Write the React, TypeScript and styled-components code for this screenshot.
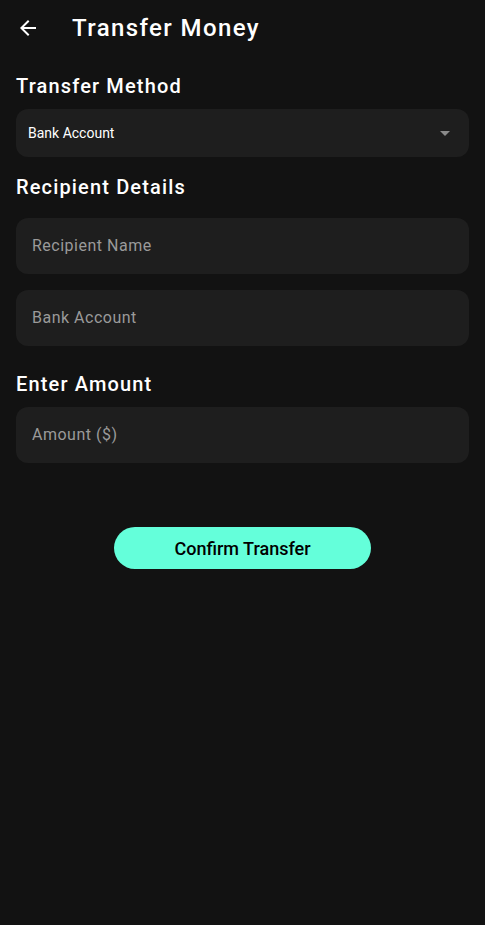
import React from "react";
import styled, { createGlobalStyle } from "styled-components";

const Global = createGlobalStyle`
  html, body { margin: 0; padding: 0; background: #121212; }
  body { font-family: Roboto, "Noto Sans", sans-serif; color: #fff; }
  * { box-sizing: border-box; }
`;

const Screen = styled.div`
  width: 485px;
  min-height: 925px;
  background: #121212;
  display: flex;
  flex-direction: column;
`;

const AppBar = styled.header`
  height: 56px;
  display: flex;
  align-items: center;
  padding-left: 16px;
`;

const BackButton = styled.button`
  width: 24px;
  height: 24px;
  padding: 0;
  border: none;
  background: transparent;
  color: #fff;
  display: flex;
  align-items: center;
  justify-content: center;
  cursor: pointer;
`;

const Title = styled.h1`
  margin: 0 0 0 32px;
  font-size: 24px;
  font-weight: 500;
  line-height: 28px;
  letter-spacing: 1.4px;
  color: #fff;
`;

const Body = styled.main`
  display: flex;
  flex-direction: column;
  padding: 0 16px;
`;

const SectionTitle = styled.h2<{ $top: number }>`
  margin: ${(p) => p.$top}px 0 0;
  font-size: 20px;
  font-weight: 500;
  line-height: 24px;
  letter-spacing: 1.15px;
  color: #fff;
`;

const Select = styled.div`
  margin-top: 11px;
  height: 48px;
  border-radius: 12px;
  background: #1e1e1e;
  display: flex;
  align-items: center;
  justify-content: space-between;
  padding: 0 19px 0 12px;
  font-size: 14px;
  color: #fff;
`;

const Caret = styled.span`
  width: 0;
  height: 0;
  border-left: 5px solid transparent;
  border-right: 5px solid transparent;
  border-top: 5px solid #8a8a8a;
`;

const Field = styled.input<{ $top: number }>`
  margin-top: ${(p) => p.$top}px;
  height: 56px;
  border: none;
  outline: none;
  border-radius: 12px;
  background: #1e1e1e;
  padding: 0 16px 1px;
  font-family: Roboto, "Noto Sans", sans-serif;
  font-size: 16px;
  letter-spacing: 0.5px;
  color: #fff;
  width: 100%;
  &::placeholder { color: #9a9a9a; }
`;

const ButtonRow = styled.div`
  display: flex;
  justify-content: center;
  margin-top: 64px;
`;

const ConfirmButton = styled.button`
  width: 257px;
  height: 42px;
  border: none;
  border-radius: 21px;
  background: #64ffda;
  color: #000;
  font-family: Roboto, "Noto Sans", sans-serif;
  font-size: 18px;
  font-weight: 500;
  cursor: pointer;
`;

export default function App() {
  return (
    <Screen>
      <Global />
      <AppBar>
        <BackButton aria-label="Back">
          <svg width="24" height="24" viewBox="0 0 24 24" fill="currentColor">
            <path d="M20 11H7.83l5.59-5.59L12 4l-8 8 8 8 1.41-1.41L7.83 13H20v-2z" />
          </svg>
        </BackButton>
        <Title>Transfer Money</Title>
      </AppBar>
      <Body>
        <SectionTitle $top={18}>Transfer Method</SectionTitle>
        <Select>
          <span>Bank Account</span>
          <Caret />
        </Select>
        <SectionTitle $top={18}>Recipient Details</SectionTitle>
        <Field $top={19} placeholder="Recipient Name" />
        <Field $top={16} placeholder="Bank Account" />
        <SectionTitle $top={26}>Enter Amount</SectionTitle>
        <Field $top={11} placeholder="Amount ($)" />
        <ButtonRow>
          <ConfirmButton>Confirm Transfer</ConfirmButton>
        </ButtonRow>
      </Body>
    </Screen>
  );
}
